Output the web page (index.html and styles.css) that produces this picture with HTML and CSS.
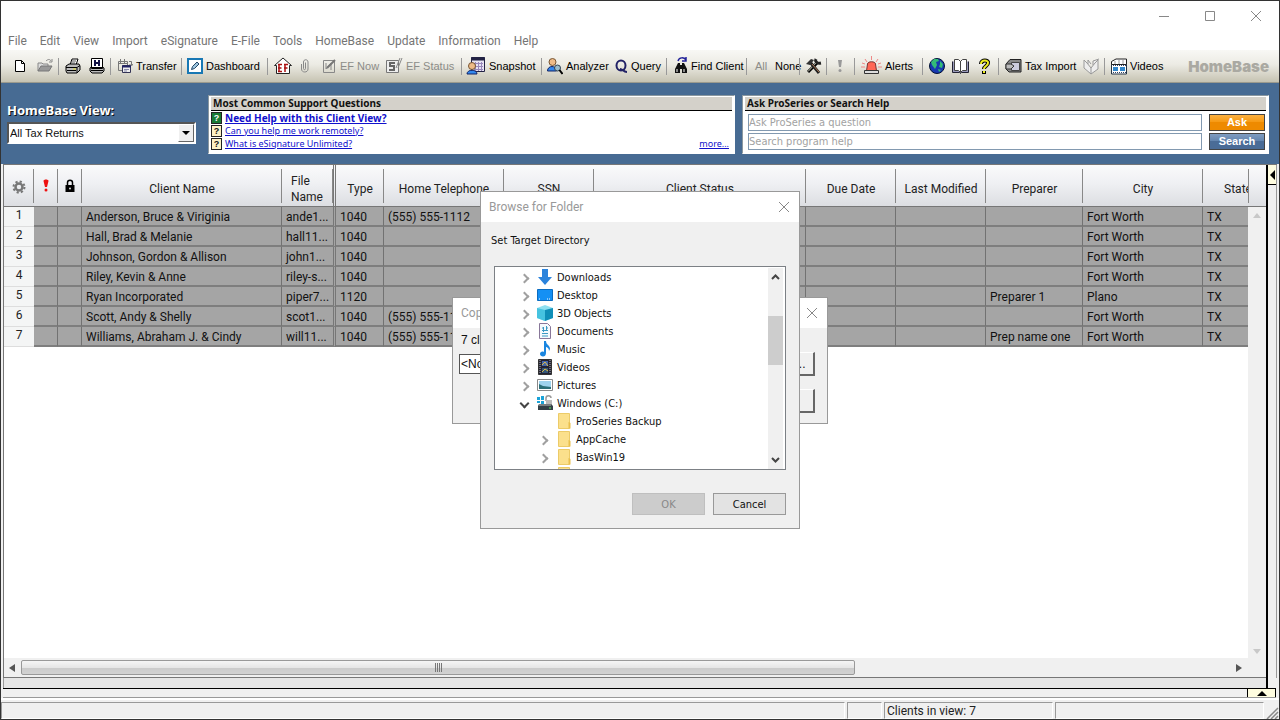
FILE: index.html
```html
<!DOCTYPE html>
<html lang="en">
<head>
<meta charset="utf-8">
<title>HomeBase</title>
<link rel="stylesheet" href="styles.css">
</head>
<body>
<div class="window">
  <header class="titlebar">
    <button class="winbtn" aria-label="Minimize"><svg width="12" height="12" viewBox="0 0 12 12"><path d="M1 6.5h10" /></svg></button>
    <button class="winbtn" aria-label="Maximize"><svg width="12" height="12" viewBox="0 0 12 12"><path d="M1.500 1.500h9v9h-9z" /></svg></button>
    <button class="winbtn" aria-label="Close"><svg width="12" height="12" viewBox="0 0 12 12"><path d="M1 1l10 10M11 1L1 11" /></svg></button>
  </header>
  <nav class="menubar">
    <button>File</button><button>Edit</button><button>View</button><button>Import</button><button>eSignature</button><button>E-File</button><button>Tools</button><button>HomeBase</button><button>Update</button><button>Information</button><button>Help</button>
  </nav>
  <div class="toolbar">
    <button aria-label="New"><svg width="14" height="16" viewBox="0 0 14 16"><path d="M2.500 2.500h6l3 3v8h-9z" fill="#fff" stroke="#000"/><path d="M8.500 2.500v3h3" fill="none" stroke="#000"/></svg></button>
    <button aria-label="Open"><svg width="17" height="16" viewBox="0 0 17 16"><path d="M1 13V5h4l1 1h5v2" fill="#ddd" stroke="#888"/><path d="M1 13l3-5h11l-3 5z" fill="#999" stroke="#777"/><path d="M9 3c2-2 4-2 5 0M15 1v3h-3" fill="none" stroke="#888"/></svg></button>
    <i class="sep"></i>
    <button aria-label="Print"><svg width="16" height="16" viewBox="0 0 16 16"><path d="M5 7l2-6h6l-2 6z" fill="#fff" stroke="#000"/><path d="M1 8l3-2h10l1 2v4l-3 3H2l-1-2z" fill="#bbb" stroke="#000"/><path d="M1 9.500h11l3-2M2 12.500h9M12 10v5" stroke="#000" fill="none"/><path d="M7 3h4M6 5h4" stroke="#555"/><path d="M8 11h3" stroke="#dd3"/></svg></button>
    <button aria-label="Print HomeBase"><svg width="16" height="16" viewBox="0 0 16 16"><path d="M2.500 .5h11v9h-11z" fill="#fff" stroke="#000"/><path d="M6 2v6M10 2v6M6 5h4" stroke="#114" stroke-width="2"/><path d="M1 10l1.500-1v1.500h11V9l1.500 1v3l-2 2H3l-2-2z" fill="#bbb" stroke="#000"/><path d="M2 12.500h12" stroke="#000"/></svg></button>
    <i class="sep"></i>
    <button><svg width="16" height="16" viewBox="0 0 16 16"><path d="M1.500 3.500h9v9h-9zM1 5.500h9M3.500 1v4M7.500 1v4M12 3.500h2.500V7M12.500 6l2 2 1.500-2" fill="none" stroke="#777"/><path d="M5.500 7.500h8v7h-8z" fill="#eee" stroke="#335"/><path d="M5 8.500h9" stroke="#226" stroke-width="2"/><path d="M7 11.500h5M7 13h3" stroke="#88a"/></svg>Transfer</button>
    <i class="sep"></i>
    <button><svg width="16" height="16" viewBox="0 0 16 16"><path d="M1 1h14v14H1z" fill="#fff" stroke="#1878b4" stroke-width="2"/><path d="M4.500 11.500l1-3L10 4l2 2-4.500 4.500z" fill="#9cc4dc" stroke="#246"/></svg>Dashboard</button>
    <i class="sep"></i>
    <button aria-label="EF Home"><svg width="18" height="18" viewBox="0 0 18 18"><path d="M.5 8.500L9 1l8.500 7.500h-2v8h-13v-8z" fill="#fff" stroke="#222"/><path d="M5 7v8M4 7.500h4M4 11h3.500M4 14.500h4M11 7v8M10 7.500h4M10 11h3.500" stroke="#a11" stroke-width="1.500"/></svg></button>
    <button aria-label="Attach"><svg width="10" height="16" viewBox="0 0 10 16"><path d="M5.500 4.500v6c0 1.500-2 1.500-2 0V4c0-3 4.500-3 4.500 0v7c0 4-6.500 4-6.500 0V6" fill="none" stroke="#888"/></svg></button>
    <button disabled><svg width="15" height="16" viewBox="0 0 15 16"><path d="M1.500 2.500h11v12h-11zM4 5v6l5-6v7" fill="none" stroke="#888"/><path d="M5 10l8-8" stroke="#777" stroke-width="2"/></svg>EF Now</button>
    <button disabled><svg width="17" height="18" viewBox="0 0 17 18"><path d="M.5 3.500h12v12H.5z" fill="#eee" stroke="#777"/><path d="M9 6H4v3h4v4H3" fill="none" stroke="#666" stroke-width="2"/><path d="M10 11l4-10M12 11l4-10" stroke="#888"/></svg>EF Status</button>
    <i class="sep"></i>
    <button><svg width="20" height="20" viewBox="0 0 20 20"><path d="M5.500 1.500h13v14h-13z" fill="#e8e4f4" stroke="#224"/><path d="M5 3h14" stroke="#224" stroke-width="3"/><path d="M8 7.500h9M8 10.500h9M8 13.500h9M9.500 6v9M12.500 6v9M15.500 6v9" stroke="#98b"/><circle cx="6" cy="10" r="3.500" fill="#eb8" stroke="#753"/><path d="M1 18c0-5 10-5 10 0z" fill="#38e" stroke="#126"/></svg>Snapshot</button>
    <i class="sep"></i>
    <button><svg width="16" height="18" viewBox="0 0 16 18"><circle cx="5.500" cy="5" r="3.500" fill="#eb8" stroke="#753"/><path d="M.5 14c0-6 9-6 9 0z" fill="#38e" stroke="#126"/><circle cx="10.500" cy="11" r="3" fill="#9bc" stroke="#345"/><path d="M12.500 13l3 4" stroke="#000" stroke-width="2"/></svg>Analyzer</button>
    <button><svg width="13" height="16" viewBox="0 0 13 16"><ellipse cx="6" cy="7.500" rx="4.500" ry="5" fill="none" stroke="#226" stroke-width="2"/><path d="M5 11c3 0 3 3 7 3" fill="none" stroke="#226" stroke-width="2"/></svg>Query</button>
    <i class="sep"></i>
    <button><svg width="14" height="18" viewBox="0 0 14 18"><path d="M4 6h2v2h2V6h2l3 6v4H8v-4H6v4H1v-4z" fill="#111"/><path d="M3 12v3M10 12v3" stroke="#fff"/><path d="M4 4c1-4 6-4 8-1M12 0v4H8" fill="none" stroke="#229" stroke-width="1.500"/></svg>Find Client</button>
    <i class="sep"></i>
    <button disabled>All</button>
    <button>None</button>
    <i class="sep"></i>
    <button aria-label="Options"><svg width="17" height="16" viewBox="0 0 17 16"><path d="M3 14L13 4" stroke="#000" stroke-width="3"/><path d="M3 13.500L12 4" stroke="#ccb"/><path d="M11 1c-1 2 0 5 5 4M5 4l9 11" fill="none" stroke="#222" stroke-width="3"/><path d="M1 6l5-5 3 1-4 5z" fill="#333"/><path d="M7 6l7 8" stroke="#a75"/></svg></button>
    <i class="sep"></i>
    <button aria-label="Important"><svg width="8" height="16" viewBox="0 0 8 16"><path d="M2 2h4L5 9H3z" fill="#999"/><circle cx="4" cy="12.500" r="1.500" fill="#999"/></svg></button>
    <i class="sep"></i>
    <button><svg width="21" height="20" viewBox="0 0 21 20"><path d="M10.500 0v4M4 3l2 3M17 3l-2 3M0 11h4M17 11h4M1 7l3 1M20 7l-3 1" stroke="#e88"/><path d="M5.500 15l1-7c0-3 8-3 8 0l1 7z" fill="#f65" stroke="#733"/><path d="M3.500 14.500h14v3h-14z" fill="#ddd" stroke="#333"/></svg>Alerts</button>
    <i class="sep"></i>
    <button aria-label="Web"><svg width="16" height="16" viewBox="0 0 16 16"><circle cx="8" cy="8" r="7.500" fill="#1838b0" stroke="#013"/><path d="M2 4l3-3h4l1 2-3 1 1 3-2 4-3-4zM11 3l3 3-1 4-3-1 1-3zM9 11l3 1-2 2z" fill="#3b7"/></svg></button>
    <button aria-label="Book"><svg width="19" height="17" viewBox="0 0 19 17"><path d="M1.500 3.500v11h7l1 1 1-1h7v-11" fill="#99b" stroke="#223"/><path d="M3.500 1.500h4l2 2 2-2h4v11h-4l-2 2-2-2h-4zM9.500 3v11" fill="#fff" stroke="#444"/></svg></button>
    <button aria-label="Help"><svg width="13" height="17" viewBox="0 0 13 17"><path d="M3 6c0-5 8-4 7-1 0 3-4 3-4 6M6 13v3" fill="none" stroke="#000" stroke-width="4"/><path d="M3 6c0-5 8-4 7-1 0 3-4 3-4 6M6 13v2" fill="none" stroke="#ee2" stroke-width="2"/></svg></button>
    <i class="sep"></i>
    <button><svg width="17" height="16" viewBox="0 0 17 16"><path d="M1 6l4-4.500h11V14H4l-3-3z" fill="#888" stroke="#222"/><path d="M6.500 4.500h8v8h-8z" fill="#ccd" stroke="#444"/><path d="M1 6h5l3 2-3 3H1z" fill="#bbb" stroke="#333"/></svg>Tax Import</button>
    <button aria-label="Fast path"><svg width="17" height="17" viewBox="0 0 17 17"><path d="M1 2v8l7 6 7-5V2l-3 3-4 5-4-5zM8 10v6M5 6V2l3 4M10 7V3l6-2" fill="#eee" stroke="#999"/></svg></button>
    <i class="sep"></i>
    <button><svg width="16" height="17" viewBox="0 0 16 17"><path d="M.5 6.500h15v9.500H.5z" fill="#fff" stroke="#234"/><path d="M2 9h5v4H2zM9 9h5v4H9z" fill="#38c"/><path d="M2 7.500h13M2 14.500h13" stroke="#346" stroke-dasharray="1 1"/><path d="M.5 6.500v-3L5 1h10.500v5.500z" fill="#fff" stroke="#222"/><path d="M4 6V3M8 6V2M12 6V2" stroke="#999"/></svg>Videos</button>
    <strong class="brand">HomeBase</strong>
  </div>

  <section class="banner">
    <div class="viewpick">
      <label for="view">HomeBase View:</label>
      <div class="selectbox">
        <select id="view"><option>All Tax Returns</option></select>
        <span class="droparrow"><svg width="8" height="4" viewBox="0 0 8 4"><path d="M0 0h8L4 4z"/></svg></span>
      </div>
    </div>
    <div class="panel">
      <h2>Most Common Support Questions</h2>
      <div class="question top"><b class="q green">?</b><a href="#">Need Help with this Client View?</a></div>
      <div class="question"><b class="q">?</b><a href="#">Can you help me work remotely?</a></div>
      <div class="question"><b class="q">?</b><a href="#">What is eSignature Unlimited?</a><a class="more" href="#">more...</a></div>
    </div>
    <div class="panel">
      <h2>Ask ProSeries or Search Help</h2>
      <div class="asklist">
        <div class="askrow"><input aria-label="Ask ProSeries" placeholder="Ask ProSeries a question"><button class="ask">Ask</button></div>
        <div class="askrow"><input aria-label="Search help" placeholder="Search program help"><button class="search">Search</button></div>
      </div>
    </div>
  </section>

  <main class="workspace">
    <div class="grid">
      <div class="tablewrap">
        <table>
          <colgroup><col class="w30"><col class="w24"><col class="w24"><col class="w200"><col class="w54"><col class="w48"><col class="w120"><col class="w90"><col class="w212"><col class="w90"><col class="w90"><col class="w97"><col class="w120"><col></colgroup>
          <thead><tr>
            <th><svg width="14" height="14" viewBox="0 0 14 14"><circle cx="7" cy="7" r="5.500" fill="none" stroke="#777" stroke-width="2" stroke-dasharray="2.200 2.120"/><circle cx="7" cy="7" r="3.500" fill="none" stroke="#777" stroke-width="2.500"/></svg></th>
            <th class="raised"><svg width="6" height="14" viewBox="0 0 6 14"><path d="M.5 2c0-2 5-2 5 0L4 8H2z" fill="#e11"/><circle cx="3" cy="11" r="1.500" fill="#e11"/></svg></th>
            <th class="raised"><svg width="10" height="14" viewBox="0 0 10 14"><path d="M2.500 7V3.500c0-3 5-3 5 0V7" fill="none" stroke="#000" stroke-width="1.500"/><path d="M.5 6h9v7h-9z"/><circle cx="5" cy="9.500" r="1" fill="#ddd"/></svg></th>
            <th>Client Name</th><th class="file">File<br>Name</th><th>Type</th><th>Home Telephone</th><th>SSN</th><th>Client Status</th><th>Due Date</th><th>Last Modified</th><th>Preparer</th><th>City</th><th>State</th>
          </tr></thead>
          <tbody>
            <tr><th>1</th><td></td><td></td><td>Anderson, Bruce &amp; Viriginia</td><td class="frozen">ande1...</td><td>1040</td><td>(555) 555-1112</td><td></td><td></td><td></td><td></td><td></td><td>Fort Worth</td><td>TX</td></tr>
            <tr><th>2</th><td></td><td></td><td>Hall, Brad &amp; Melanie</td><td class="frozen">hall11...</td><td>1040</td><td></td><td></td><td></td><td></td><td></td><td></td><td>Fort Worth</td><td>TX</td></tr>
            <tr><th>3</th><td></td><td></td><td>Johnson, Gordon &amp; Allison</td><td class="frozen">john1...</td><td>1040</td><td></td><td></td><td></td><td></td><td></td><td></td><td>Fort Worth</td><td>TX</td></tr>
            <tr><th>4</th><td></td><td></td><td>Riley, Kevin &amp; Anne</td><td class="frozen">riley-s...</td><td>1040</td><td></td><td></td><td></td><td></td><td></td><td></td><td>Fort Worth</td><td>TX</td></tr>
            <tr><th>5</th><td></td><td></td><td>Ryan Incorporated</td><td class="frozen">piper7...</td><td>1120</td><td></td><td></td><td></td><td></td><td></td><td>Preparer 1</td><td>Plano</td><td>TX</td></tr>
            <tr><th>6</th><td></td><td></td><td>Scott, Andy &amp; Shelly</td><td class="frozen">scot1...</td><td>1040</td><td>(555) 555-11</td><td></td><td></td><td></td><td></td><td></td><td>Fort Worth</td><td>TX</td></tr>
            <tr><th>7</th><td></td><td></td><td>Williams, Abraham J. &amp; Cindy</td><td class="frozen">will11...</td><td>1040</td><td>(555) 555-11</td><td></td><td></td><td></td><td></td><td>Prep name one</td><td>Fort Worth</td><td>TX</td></tr>
          </tbody>
        </table>
      </div>
      <div class="vscroll"><span class="corner"></span><span class="tri up"></span><span class="tri down"></span></div>
      <div class="hscroll"><span class="tri left"></span><div class="track"><div class="thumb"><i></i><i></i><i></i><i></i></div></div><span class="tri right"></span></div>
    </div>
    <div class="sidebar"><button aria-label="Expand side panel"><svg width="5" height="10" viewBox="0 0 5 10"><path d="M5 0v10L0 5z"/></svg></button></div>
  </main>
  <div class="band"></div>
  <div class="drawer"><button aria-label="Expand bottom panel"><svg width="10" height="5" viewBox="0 0 10 5"><path d="M0 5h10L5 0z"/></svg></button></div>
  <footer class="status">
    <span class="pane"></span><span class="pane"></span><span class="pane">Clients in view: 7</span><span class="pane"></span>
    <svg width="13" height="18" viewBox="0 0 13 18"><path d="M1 17L12 6M5 17l7-7M9 17l3-3" stroke="#888" stroke-width="1.500"/></svg>
  </footer>

  <section class="dialog copy" aria-label="Copy">
    <div class="dlgtitle"><span>Copy</span><button aria-label="Close"><svg width="12" height="12" viewBox="0 0 12 12"><path d="M1 1l10 10M11 1L1 11"/></svg></button></div>
    <div class="copybody">
      <p>7 clients</p>
      <div class="copyrow"><input aria-label="Target" value="&lt;None&gt;"><button>...</button></div>
      <div class="copyrow end"><button class="wide" aria-label="Cancel copy"></button></div>
    </div>
  </section>

  <section class="dialog browse" aria-label="Browse for Folder">
    <div class="dlgtitle"><span>Browse for Folder</span><button aria-label="Close"><svg width="12" height="12" viewBox="0 0 12 12"><path d="M1 1l10 10M11 1L1 11"/></svg></button></div>
    <div class="browsebody">
      <p>Set Target Directory</p>
      <div class="treebox">
        <ul class="tree">
          <li><span class="chev"></span><svg width="16" height="16" viewBox="0 0 16 16"><path d="M5 0h6v8h4l-7 8-7-8h4z" fill="#2b83dc"/></svg>Downloads</li>
          <li><span class="chev"></span><svg width="16" height="16" viewBox="0 0 16 16"><path d="M.5 2.500h15v11H.5z" fill="#1490f4" stroke="#0b6cc0"/><path d="M2 12h1M10 12h1M12 12h1" stroke="#fff"/></svg>Desktop</li>
          <li><span class="chev"></span><svg width="16" height="16" viewBox="0 0 16 16"><path d="M0 3l8-3 8 3v10l-8 3-8-3z" fill="#8fe0f0"/><path d="M8 5l8-2v10l-8 3z" fill="#108fb8"/><path d="M0 3l8 2v11l-8-3z" fill="#46c3e0"/></svg>3D Objects</li>
          <li><span class="chev"></span><svg width="16" height="16" viewBox="0 0 16 16"><path d="M2.500.5h8l3 3v12h-11z" fill="#f4fafd" stroke="#879"/><path d="M5 5h2M9 5h2M5 7.500h6M5 10.500h6M5 13h6M6.500 4v5M9.500 3v5" stroke="#3a9ac4"/></svg>Documents</li>
          <li><span class="chev"></span><svg width="16" height="16" viewBox="0 0 16 16"><path d="M7 0h2c0 4 4 4 4 8l-1 2c0-3-2-4-3-4v6c0 5-6 4-6 1 0-2 2-3 4-2z" fill="#1a86e0"/></svg>Music</li>
          <li><span class="chev"></span><svg width="16" height="16" viewBox="0 0 16 16"><path d="M1.500.5h13v15h-13z" fill="#223" stroke="#333"/><path d="M3 1v14M13 1v14" stroke="#bbb" stroke-dasharray="1 1"/><path d="M5 2h6v5H5z" fill="#46a"/><path d="M5 9h6v5H5z" fill="#357"/><path d="M5 6l3-3 3 4M5 13l3-3 3 2" stroke="#db4" fill="none"/></svg>Videos</li>
          <li><span class="chev"></span><svg width="16" height="16" viewBox="0 0 16 16"><path d="M.5 2.500h15v11H.5z" fill="#fff" stroke="#888"/><path d="M2 4h12v8H2z" fill="#9fd3ee"/><path d="M2 7l4 2 8 1v2H2z" fill="#2c6f78"/></svg>Pictures</li>
          <li><span class="chev open"></span><svg width="16" height="16" viewBox="0 0 16 16"><path d="M0 2h3v3H0zM4 1h3v4H4zM0 6h3v2H0zM4 6h3v3H4z" fill="#1aa3d8"/><path d="M9 6V3c0-3 5-3 5 0" fill="none" stroke="#999" stroke-width="1.500"/><path d="M9 5h6v5H9z" fill="#bbb"/><path d="M2 9h12l2 2v4H1v-4z" fill="#344047"/><path d="M2 10h12" stroke="#bbb"/><path d="M12 13h2" stroke="#5e5"/></svg>Windows (C:)</li>
          <li class="child"><span class="chev none"></span><svg width="16" height="18" viewBox="0 0 16 18"><path d="M2.500 1.500h11v15h-11z" fill="#fbe08c" stroke="#eccb68"/><path d="M12.500 10v6.500h2V11z" fill="#e9bf4c"/></svg>ProSeries Backup</li>
          <li class="child"><span class="chev"></span><svg width="16" height="18" viewBox="0 0 16 18"><path d="M2.500 1.500h11v15h-11z" fill="#fbe08c" stroke="#eccb68"/><path d="M12.500 10v6.500h2V11z" fill="#e9bf4c"/></svg>AppCache</li>
          <li class="child"><span class="chev"></span><svg width="16" height="18" viewBox="0 0 16 18"><path d="M2.500 1.500h11v15h-11z" fill="#fbe08c" stroke="#eccb68"/><path d="M12.500 10v6.500h2V11z" fill="#e9bf4c"/></svg>BasWin19</li>
          <li class="child"><span class="chev none"></span><svg width="16" height="18" viewBox="0 0 16 18"><path d="M2.500 1.500h11v15h-11z" fill="#fbe08c" stroke="#eccb68"/></svg></li>
        </ul>
        <div class="treescroll">
          <svg width="9" height="6" viewBox="0 0 9 6"><path d="M1 5l3.500-3.500L8 5"/></svg>
          <div class="treethumb"></div>
          <svg width="9" height="6" viewBox="0 0 9 6"><path d="M1 1l3.500 3.500L8 1"/></svg>
        </div>
      </div>
      <div class="actions"><button disabled>OK</button><button>Cancel</button></div>
    </div>
  </section>
</div>
</body>
</html>
```
FILE: styles.css
```css
*, *::before { box-sizing: border-box; }
body {
  margin: 0;
  font-family: Roboto, "Noto Sans", sans-serif;
  font-size: 12px;
  color: #222;
}
button {
  font: inherit;
  color: inherit;
  background: none;
  border: 0;
  padding: 0;
}
svg { flex: none; }
.window {
  position: relative;
  display: flex;
  flex-direction: column;
  min-height: 100vh;
  border: 1px solid #333;
  background: #f0f0f0;
  overflow: hidden;
}

.titlebar {
  display: flex;
  justify-content: flex-end;
  height: 29px;
  background: #fff;
}
.winbtn { width: 46px; }
.winbtn svg, .dlgtitle svg { fill: none; stroke: #888; vertical-align: middle; }

.menubar {
  display: flex;
  gap: 13px;
  height: 20px;
  padding: 2px 0 0 7px;
  background: #fff;
  color: #757575;
}

.toolbar {
  display: grid;
  grid-template-columns: 24px 21px 7px 24px 21px 7px 64px 6px 80px 7px 26px 22px 64px 75px 5px 75px 6px 68px 51px 8px 72px 9px 20px 24px 6px 21px 10px 18px 7px 61px 7px 22px 27px 20px 7px 78px 21px 7px 60px 1fr;
  align-items: center;
  height: 33px;
  padding: 0 10px 0 12px;
  background: linear-gradient(#f8f8f5, #ecebe4 45%, #c6c3b2);
  border-bottom: 1px solid #9b9a8e;
  font-family: "Liberation Sans", sans-serif;
  font-size: 11px;
  color: #000;
  white-space: nowrap;
}
.toolbar button { display: flex; align-items: center; gap: 3px; }
.toolbar button:disabled { color: #8c8c88; }
.sep { height: 17px; border-left: 1px solid #999; }
.brand {
  justify-self: end;
  font-family: Inter, sans-serif;
  font-size: 15px;
  font-weight: 900;
  color: #aaa9a2;
}

.banner {
  display: grid;
  grid-template-columns: 194px 1fr 1fr;
  gap: 7px;
  padding: 12px 10px 10px 6px;
  background: #476b93;
}
.viewpick { display: flex; flex-direction: column; gap: 2px; padding: 6px 5px 0 0; }
.viewpick label {
  font-family: "Noto Sans", sans-serif;
  font-size: 13px;
  line-height: 19px;
  font-weight: 700;
  color: #fff;
  text-shadow: 1px 1px 0 #111;
}
.selectbox { position: relative; }
.selectbox select {
  appearance: none;
  display: block;
  width: 100%;
  height: 22px;
  padding: 0 1px;
  border: 2px solid #fff;
  border-top-color: #555;
  border-left-color: #555;
  border-radius: 0;
  background: #fff;
  color: #111;
  font-family: "Liberation Sans", sans-serif;
  font-size: 11px;
}
.droparrow {
  position: absolute;
  top: 2px;
  right: 2px;
  bottom: 2px;
  width: 16px;
  display: flex;
  align-items: center;
  justify-content: center;
  background: #f0f0f0;
  border: 1px solid #fff;
  border-right-color: #666;
  border-bottom-color: #666;
  pointer-events: none;
}
.panel {
  min-width: 0;
  height: 59px;
  padding: 1px 2px;
  background: #fff;
  border: 1px solid #fff;
  border-top-color: #8b98a0;
  border-left-color: #8b98a0;
}
.panel h2 {
  margin: 0;
  padding-left: 2px;
  font-family: "Noto Sans", sans-serif;
  font-size: 10px;
  line-height: 13px;
  font-weight: 700;
  color: #111;
  background: #d4d1ca;
  border-bottom: 1px solid #000;
}
.question {
  display: flex;
  align-items: center;
  gap: 3px;
  height: 13px;
  font-family: "Noto Sans", sans-serif;
  font-size: 9px;
}
.question a { color: #11c; line-height: 12px; }
.question.top a { font-size: 10px; font-weight: 700; }
.question .more { margin-left: auto; padding-right: 3px; }
.q {
  width: 11px;
  height: 12px;
  border: 1px solid #222;
  background: #fbf0c4;
  font-family: "Liberation Sans", sans-serif;
  line-height: 10px;
  text-align: center;
  color: #111;
}
.q.green { background: #187a34; color: #fff; }
.asklist { display: flex; flex-direction: column; gap: 2px; padding: 3px 1px 0 3px; }
.askrow { display: flex; gap: 7px; }
.askrow input {
  flex: 1;
  min-width: 0;
  height: 17px;
  padding: 0;
  border: 1px solid #8299b0;
  background: #fff;
  font-family: "DejaVu Sans Condensed", "DejaVu Sans", sans-serif;
  font-size: 11px;
}
.askrow input::placeholder { color: #a2a2a2; }
.askrow button {
  width: 56px;
  height: 17px;
  border: 1px solid #444;
  color: #fff;
  font-family: "Liberation Sans", sans-serif;
  font-size: 11px;
  line-height: 15px;
  font-weight: 700;
}
.ask { background: linear-gradient(#fbb040, #f79a14 45%, #ee8a00 50%); }
.search { background: linear-gradient(#7f9cc0, #6486b0 45%, #4a6c97 50%); }

.workspace { flex: 1; display: flex; margin: 0 2px; min-height: 0; border-top: 1px solid #777; }
.grid {
  flex: 1;
  min-width: 0;
  display: grid;
  grid-template: 1fr 19px / 1fr 18px;
  background: #fff;
  border-left: 1px solid #777;
  border-bottom: 1px solid #777;
}
.tablewrap { overflow: hidden; }
.tablewrap table { width: 1269px; table-layout: fixed; border-collapse: separate; border-spacing: 0; }
.w24 { width: 24px; }
.w30 { width: 30px; }
.w48 { width: 48px; }
.w54 { width: 54px; }
.w90 { width: 90px; }
.w97 { width: 97px; }
.w120 { width: 120px; }
.w200 { width: 200px; }
.w212 { width: 212px; }
th, td { padding: 0; font-weight: 400; overflow: hidden; white-space: nowrap; }
thead th {
  height: 42px;
  padding-top: 6px;
  border-bottom: 1px solid #777;
  line-height: 16px;
  color: #222;
  background:
    linear-gradient(#888, #888) right 4px / 1px 34px no-repeat,
    linear-gradient(#fafafb, #eff0f3 45%, #dcdee2);
}
thead th:first-child { padding-top: 2px; }
thead th.raised { padding-top: 0; }
thead th.file { text-align: left; padding-left: 9px; }
thead th.file, .frozen { border-right: 3px double #777; }
thead svg { vertical-align: middle; }
tbody tr { height: 20px; }
tbody th { background: #f4f5f5; border-bottom: 1px solid #ddd; line-height: 17px; padding-bottom: 2px; }
td {
  padding: 3px 0 0 4px;
  line-height: 15px;
  background: #a5a5a5;
  color: #111;
  border-right: 1px solid #727272;
  border-bottom: 2px solid #7e7e7e;
}
.vscroll {
  display: flex;
  flex-direction: column;
  align-items: center;
  background: #f0f0f0;
}
.corner {
  width: 100%;
  height: 42px;
  border-bottom: 1px solid #777;
  background:
    linear-gradient(#888, #888) left 4px / 1px 34px no-repeat,
    linear-gradient(#fafafb, #eff0f3 45%, #dcdee2);
}
.tri { width: 0; height: 0; border: 4px solid transparent; }
.tri.up { margin-top: 2px; border-bottom: 5px solid #c8c8c8; }
.tri.down { margin-top: auto; border-top: 5px solid #c8c8c8; }
.tri.left { border-right: 6px solid #555; border-left: 0; }
.tri.right { border-left: 6px solid #555; border-right: 0; }
.hscroll {
  grid-column: 1 / -1;
  display: flex;
  align-items: center;
  gap: 6px;
  padding: 0 24px 0 5px;
  background: #f0f0f0;
}
.track { flex: 1; }
.thumb {
  display: flex;
  align-items: center;
  justify-content: center;
  gap: 1px;
  width: 69%;
  height: 15px;
  border: 1px solid #999;
  border-radius: 2px;
  background: linear-gradient(#f5f5f5, #e6e6e6 50%, #cbcbcb 55%, #d2d2d2);
}
.thumb i { width: 1px; height: 9px; background: #777; }
.sidebar {
  width: 11px;
  border-left: 2px solid #000;
  border-right: 1px solid #999;
  background: #f0f0f0;
}
.sidebar button {
  display: flex;
  align-items: center;
  justify-content: center;
  width: 8px;
  height: 20px;
  background: #fffde0;
  border-bottom: 1px solid #000;
}
.band { height: 10px; margin: 0 11px 0 2px; background: #e6e6e6; border-left: 1px solid #999; border-right: 2px solid #000; }
.drawer {
  display: flex;
  justify-content: flex-end;
  height: 10px;
  margin: 0 3px 0 2px;
  border-top: 1px solid #000;
  border-bottom: 1px solid #999;
}
.drawer button {
  display: flex;
  align-items: center;
  justify-content: center;
  width: 29px;
  background: #fffde0;
  border-left: 1px solid #000;
  border-right: 1px solid #000;
}
.status {
  display: grid;
  grid-template-columns: 1fr 35px 169px 209px 13px;
  gap: 2px;
  height: 21px;
  padding-top: 2px;
  border-top: 2px solid #fff;
}
.pane {
  height: 17px;
  padding-left: 2px;
  line-height: 17px;
  border: 1px solid #fff;
  border-top-color: #999;
  border-left-color: #999;
}

.dialog {
  position: absolute;
  display: flex;
  flex-direction: column;
  border: 1px solid #999;
  background: #f0f0f0;
  color: #111;
}
.dlgtitle {
  display: flex;
  justify-content: space-between;
  align-items: center;
  height: 30px;
  padding: 0 9px 0 8px;
  background: #fff;
  color: #999;
}
.dlgtitle button { display: flex; }
.copy { top: 296px; left: calc(50% - 188px); width: 376px; height: 127px; }
.copybody {
  display: flex;
  flex-direction: column;
  padding: 4px 12px 0 6px;
  font-family: "Liberation Sans", sans-serif;
}
.copybody p { margin: 0 0 4px 2px; line-height: 16px; }
.copyrow { display: flex; justify-content: space-between; align-items: center; }
.copyrow.end { justify-content: flex-end; margin-top: 13px; }
.copyrow input {
  width: 320px;
  height: 20px;
  padding: 0 1px;
  border: 1px solid #555;
  background: #fff;
  color: #111;
  font: inherit;
}
.copyrow button {
  width: 28px;
  height: 24px;
  border: 1px solid #fff;
  border-right: 2px solid #666;
  border-bottom: 2px solid #666;
}
.copyrow .wide { width: 74px; }

.browse { top: 190px; left: calc(50% - 160px); width: 320px; height: 338px; font-family: "DejaVu Sans Condensed", "DejaVu Sans", sans-serif; font-size: 11px; }
.browse .dlgtitle { font-family: Roboto, sans-serif; font-size: 12px; }
.browsebody { padding: 10px 13px 0; }
.browsebody p { margin: 0 0 17px -3px; line-height: 17px; }
.treebox {
  display: flex;
  height: 204px;
  padding: 1px 2px 0 0;
  border: 1px solid #7c8085;
  background: #fff;
  overflow: hidden;
}
.tree { flex: 1; margin: 0; padding: 0 0 0 24px; list-style: none; }
.tree li { display: flex; align-items: center; gap: 4px; height: 18px; }
.tree .child { padding-left: 19px; }
.tree li svg { margin-left: 4px; }
.chev { width: 10px; height: 18px; padding-top: 2px; display: flex; align-items: center; justify-content: center; }
.chev::before {
  content: "";
  width: 7px;
  height: 7px;
  border-top: 2px solid #a0a0a0;
  border-right: 2px solid #a0a0a0;
  transform: rotate(45deg);
}
.chev.open { padding-top: 0; }
.chev.open::before { border-color: #444; transform: rotate(135deg); }
.chev.none { visibility: hidden; }
.treescroll {
  display: flex;
  flex-direction: column;
  align-items: center;
  width: 15px;
  padding: 6px 0;
  background: #f0f0f0;
}
.treescroll svg { fill: none; stroke: #444; stroke-width: 2; }
.treethumb { width: 15px; height: 49px; margin: 36px 0 auto; background: #cdcdcd; }
.actions { display: flex; justify-content: flex-end; gap: 8px; margin-top: 23px; }
.actions button { width: 73px; height: 22px; border: 1px solid #999; background: #e3e3e3; }
.actions button:disabled { background: #ccc; border-color: #bfbfbf; color: #888; }
```
